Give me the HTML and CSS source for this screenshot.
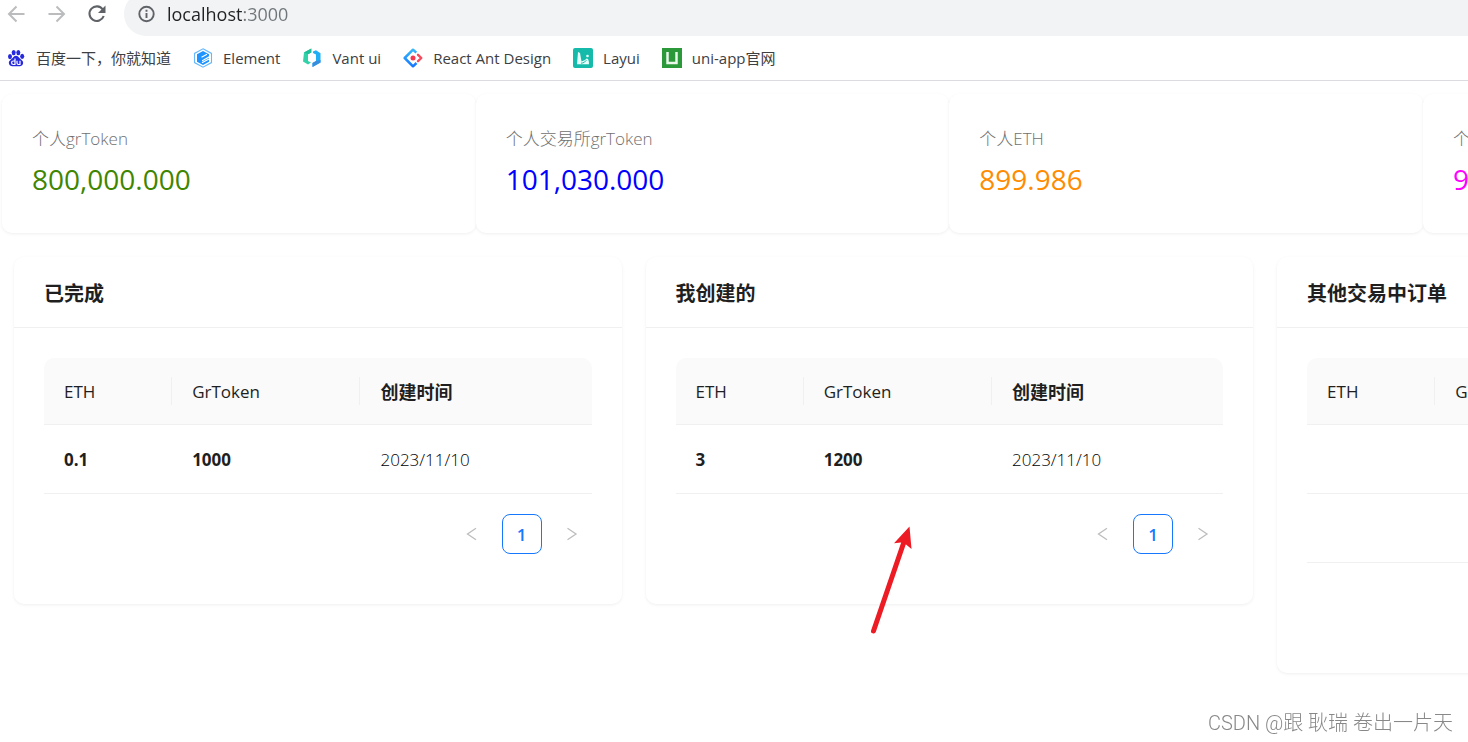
FILE: index.html
```html
<!DOCTYPE html>
<html lang="zh-CN">
<head>
<meta charset="utf-8">
<title>localhost:3000</title>
<link rel="stylesheet" href="styles.css">
</head>
<body>
<header class="browser">
  <div class="toolbar">
    <div class="nav-buttons">
      <button class="nav-button" type="button" aria-label="后退">
        <svg width="20" height="20" viewBox="0 0 20 20" fill="none" stroke="#babcbe" stroke-width="2"><path d="M18.500 10H3M10.500 2.500L3 10l7.500 7.500"/></svg>
      </button>
      <button class="nav-button" type="button" aria-label="前进">
        <svg width="20" height="20" viewBox="0 0 20 20" fill="none" stroke="#babcbe" stroke-width="2"><path d="M2.500 10H18M10.500 2.500L18 10l-7.500 7.500"/></svg>
      </button>
      <button class="nav-button" type="button" aria-label="刷新">
        <svg width="20" height="20" viewBox="0 0 20 20" fill="none"><path d="M16.800 5.500A7.300 7.300 0 1 0 17.700 12" stroke="#5f6368" stroke-width="2.100"/><path d="M19.500 1.500V9H12z" fill="#5f6368"/></svg>
      </button>
    </div>
    <div class="omnibox">
      <svg width="18" height="18" viewBox="0 0 18 18" fill="none"><circle cx="8.500" cy="9" r="7.200" stroke="#5f6368" stroke-width="1.900"/><path d="M8.500 8v5M8.500 4.700v2" stroke="#5f6368" stroke-width="1.900"/></svg>
      <input class="address" type="text" value="localhost:3000" aria-label="地址">
    </div>
  </div>
  <nav class="bookmarks">
    <a class="bookmark" href="#"><svg width="20" height="20" viewBox="0 0 20 20"><g fill="#2629dd"><ellipse cx="4" cy="8.600" rx="2" ry="2.600"/><ellipse cx="7.700" cy="4.600" rx="2" ry="2.700"/><ellipse cx="12.300" cy="4.600" rx="2" ry="2.700"/><ellipse cx="16.200" cy="8.300" rx="2" ry="2.600"/><path d="M10 7.800c2 0 2.700 1.700 4.200 3 2.600 2.100 3.300 3 2.800 5-.6 2.500-2.800 2.700-7 2.500-4.200.2-6.400 0-7-2.500-.5-2 .2-2.900 2.800-5C7.300 9.500 8 7.800 10 7.800z"/></g><path d="M9 10.500v6H7.300a1.700 1.700 0 0 1 0-3.500H9M11 12.700v2.400c0 1 .5 1.400 1.400 1.400H14v-3.800" fill="none" stroke="#fff" stroke-width="1.200"/></svg>百度一下，你就知道</a>
    <a class="bookmark" href="#"><svg width="20" height="20" viewBox="0 0 20 20"><path d="M10 .8l8.500 4.600v9.200L10 19.200l-8.500-4.600V5.400z" fill="#fff" stroke="#65b8ff" stroke-width="1.100"/><path d="M10 3l6 3.300v2L9 12.200v1.300l7-3.800v4L10 17l-6-3.300V6.300z" fill="#1f93ff"/><path d="M8.500 9.200L14 6.300M9 14.800l7-3.800" stroke="#fff" stroke-width="1.200"/></svg>Element</a>
    <a class="bookmark" href="#"><svg width="20" height="20" viewBox="0 0 20 20"><path d="M2 4.500L9.300.5v4L6 6.300V13l3 1.600-3 2L1 13.500z" fill="#32d2a9"/><path d="M2 4.500L9.300.5v4L6 6.300z" fill="#1fbd98"/><path d="M11 3.500L14 2.300l4.500 3v9.200L10.500 19v-4l3.500-2V6.500l-3-1.400z" fill="#20aff5"/><path d="M18.500 12v2.500L10.500 19v-4l3.500-2z" fill="#398dde"/></svg>Vant ui</a>
    <a class="bookmark" href="#"><svg width="20" height="20" viewBox="0 0 20 20" fill="none"><defs><linearGradient id="antBlue" x1="0" y1="0" x2="0" y2="1"><stop stop-color="#36b7fa"/><stop offset="1" stop-color="#1677ff"/></linearGradient></defs><path d="M13.300 4.700L10 1.700 1.700 10 10 18.300l3.500-3.300" stroke="url(#antBlue)" stroke-width="2.500" stroke-linejoin="round"/><path d="M15 6.800L18.300 10 15 13.200" stroke="#f74a5c" stroke-width="2.400" stroke-linecap="round" stroke-linejoin="round"/><circle cx="10" cy="10" r="2.500" fill="#f5384d"/></svg>React Ant Design</a>
    <a class="bookmark" href="#"><svg width="20" height="20" viewBox="0 0 20 20"><rect width="20" height="20" rx="2" fill="#16baaa"/><path d="M5 4l2 1 1.500 8.500L12 12l1.500-1.500 1.500.5.800 2.200.2 3H4z" fill="#e8fffb"/><circle cx="14.500" cy="8" r="1.300" fill="#e8fffb"/><path d="M8 15.200c3 0 3.500-1.700 5.500-2.700" fill="none" stroke="#16baaa" stroke-width="1"/></svg>Layui</a>
    <a class="bookmark" href="#"><svg width="20" height="20" viewBox="0 0 20 20"><path fill="#2b9939" d="M0 0h20v20H0z"/><path d="M5.500 4v11h9V4" fill="none" stroke="#e9f8ea" stroke-width="2.500"/></svg>uni-app官网</a>
  </nav>
</header>

<main class="page">
  <section class="stats">
    <article class="card stat"><h2 class="stat-title">个人grToken</h2><p class="stat-value green">800,000.000</p></article>
    <article class="card stat"><h2 class="stat-title">个人交易所grToken</h2><p class="stat-value blue">101,030.000</p></article>
    <article class="card stat"><h2 class="stat-title">个人ETH</h2><p class="stat-value orange">899.986</p></article>
    <article class="card stat"><h2 class="stat-title">个</h2><p class="stat-value magenta">9</p></article>
  </section>

  <section class="orders">
    <article class="card">
      <h2 class="card-title">已完成</h2>
      <div class="card-body">
        <table class="table">
          <thead><tr><th class="col-eth">ETH</th><th class="col-token">GrToken</th><th class="col-time">创建时间</th></tr></thead>
          <tbody><tr><td><b>0.1</b></td><td><b>1000</b></td><td>2023/11/10</td></tr></tbody>
        </table>
        <div class="pagination">
          <button class="page-button" type="button" aria-label="上一页" disabled><svg width="12" height="14" viewBox="0 0 12 14" fill="none" stroke="#bdbdbd" stroke-width="1.300"><path d="M10 1.300L1.500 7l8.500 5.700"/></svg></button>
          <button class="page-button current" type="button">1</button>
          <button class="page-button" type="button" aria-label="下一页" disabled><svg width="12" height="14" viewBox="0 0 12 14" fill="none" stroke="#bdbdbd" stroke-width="1.300"><path d="M1.500 1.300L10 7l-8.500 5.700"/></svg></button>
        </div>
      </div>
    </article>

    <article class="card">
      <h2 class="card-title">我创建的</h2>
      <div class="card-body">
        <table class="table">
          <thead><tr><th class="col-eth">ETH</th><th class="col-token">GrToken</th><th class="col-time">创建时间</th></tr></thead>
          <tbody><tr><td><b>3</b></td><td><b>1200</b></td><td>2023/11/10</td></tr></tbody>
        </table>
        <div class="pagination">
          <button class="page-button" type="button" aria-label="上一页" disabled><svg width="12" height="14" viewBox="0 0 12 14" fill="none" stroke="#bdbdbd" stroke-width="1.300"><path d="M10 1.300L1.500 7l8.500 5.700"/></svg></button>
          <button class="page-button current" type="button">1</button>
          <button class="page-button" type="button" aria-label="下一页" disabled><svg width="12" height="14" viewBox="0 0 12 14" fill="none" stroke="#bdbdbd" stroke-width="1.300"><path d="M1.500 1.300L10 7l-8.500 5.700"/></svg></button>
        </div>
      </div>
      <svg class="pointer" width="46" height="110" viewBox="0 0 46 110"><path d="M3.500 106L35 14" stroke="#ed1c24" stroke-width="5" stroke-linecap="round"/><path d="M39.500 1.500L41.500 24 36 19.500 31 17.500 24 18.200z" fill="#ed1c24"/></svg>
    </article>

    <article class="card">
      <h2 class="card-title">其他交易中订单</h2>
      <div class="card-body">
        <table class="table">
          <thead><tr><th class="col-eth">ETH</th><th class="col-token">G</th><th class="col-time"></th></tr></thead>
          <tbody><tr><td></td><td></td><td></td></tr><tr><td></td><td></td><td></td></tr></tbody>
        </table>
        <div class="pagination"></div>
      </div>
    </article>
  </section>
</main>

<p class="watermark">CSDN @跟 耿瑞 卷出一片天</p>
</body>
</html>
```

FILE: styles.css
```css
* {
  box-sizing: border-box;
}

body {
  margin: 0;
  min-height: 100vh;
  overflow: hidden;
  background: #fff;
  color: #1f1f1f;
  font-family: "Open Sans", "Noto Sans CJK SC", sans-serif;
  font-size: 17px;
}

h2,
p {
  margin: 0;
}

button {
  padding: 0;
  border: 0;
  background: none;
  font: inherit;
}

/* Browser chrome */
.browser {
  border-bottom: 1px solid #dadce0;
}

.toolbar {
  display: flex;
  height: 36px;
  overflow: hidden;
}

.nav-buttons {
  display: flex;
  gap: 20px;
  height: 28px;
  padding: 0 18px 0 6px;
}

.nav-button {
  display: flex;
  align-items: center;
  width: 20px;
}

.omnibox {
  display: flex;
  flex: 1;
  align-items: center;
  gap: 11px;
  height: 44px;
  margin-top: -8px;
  padding-left: 14px;
  border-radius: 22px 0 0 22px;
  background: #f1f3f4;
}

.address {
  flex: 1;
  padding: 0;
  border: 0;
  outline: 0;
  background: linear-gradient(90deg, #202124 75px, #70757a 75px);
  background-clip: text;
  color: transparent;
  font: 18px/28px "Open Sans", sans-serif;
}

.bookmarks {
  display: flex;
  align-items: center;
  gap: 22px;
  height: 44px;
  padding-left: 6px;
}

.bookmark {
  display: flex;
  align-items: center;
  gap: 10px;
  color: #3c4043;
  font-size: 15px;
  line-height: 24px;
  text-decoration: none;
  white-space: nowrap;
}

/* The content is wider than the window and runs off its right edge. */
.page {
  width: 129.2%;
  padding: 13px 0 0 2px;
}

.card {
  position: relative;
  border-radius: 10px;
  background: #fff;
  box-shadow: 0 1px 3px rgba(0, 0, 0, 0.05), 0 1px 6px rgba(0, 0, 0, 0.02);
}

.stats {
  display: grid;
  grid-template-columns: repeat(4, 1fr);
}

.stat {
  padding: 30px;
}

.stat-title {
  margin-bottom: 4px;
  color: #707070;
  font-size: 17px;
  font-weight: 300;
  line-height: 30px;
}

.stat-value {
  padding-bottom: 3px;
  font-size: 28px;
  line-height: 42px;
}

.green {
  color: #3f8600;
}

.blue {
  color: #00f;
}

.orange {
  color: #ff8c00;
}

.magenta {
  color: #f0f;
}

.orders {
  display: grid;
  grid-template-columns: repeat(3, 1fr);
  align-items: start;
  gap: 24px;
  padding: 24px 12px;
}

.card-title {
  padding: 22px 30px 18px;
  border-bottom: 1px solid #f0f0f0;
  font-size: 20px;
  font-weight: 700;
  line-height: 30px;
}

.card-body {
  padding: 30px;
}

.table {
  width: 100%;
  border-spacing: 0;
  table-layout: fixed;
  line-height: 28px;
}

.table th {
  position: relative;
  height: 67px;
  padding: 2px 20px 0;
  border-bottom: 1px solid #f0f0f0;
  background: #fafafa;
  font-weight: 500;
  text-align: left;
}

.table .col-eth {
  width: 23.4%;
  border-top-left-radius: 10px;
}

.table .col-token {
  width: 34.4%;
}

.table .col-time {
  border-top-right-radius: 10px;
  font-size: 18px;
  font-weight: 700;
}

.col-eth::after,
.col-token::after {
  position: absolute;
  top: 19px;
  right: 0;
  width: 1px;
  height: 28px;
  background: #f0f0f0;
  content: "";
}

.table td {
  height: 69px;
  padding: 2px 20px 0;
  border-bottom: 1px solid #f0f0f0;
  color: #000;
  font-weight: 300;
}

.table b {
  color: #1f1f1f;
  font-weight: 700;
}

.pagination {
  display: flex;
  justify-content: flex-end;
  gap: 10px;
  height: 40px;
  margin: 20px 0;
}

.page-button {
  display: flex;
  align-items: center;
  justify-content: center;
  width: 40px;
  border-radius: 8px;
}

.current {
  border: 1px solid #1677ff;
  color: #1677ff;
  font-weight: 600;
}

.pointer {
  position: absolute;
  top: 268px;
  left: 224px;
}

.watermark {
  position: fixed;
  right: 15px;
  bottom: 4px;
  color: #888;
  font: 300 20px/30px Roboto, "Noto Sans CJK SC", sans-serif;
}
```
